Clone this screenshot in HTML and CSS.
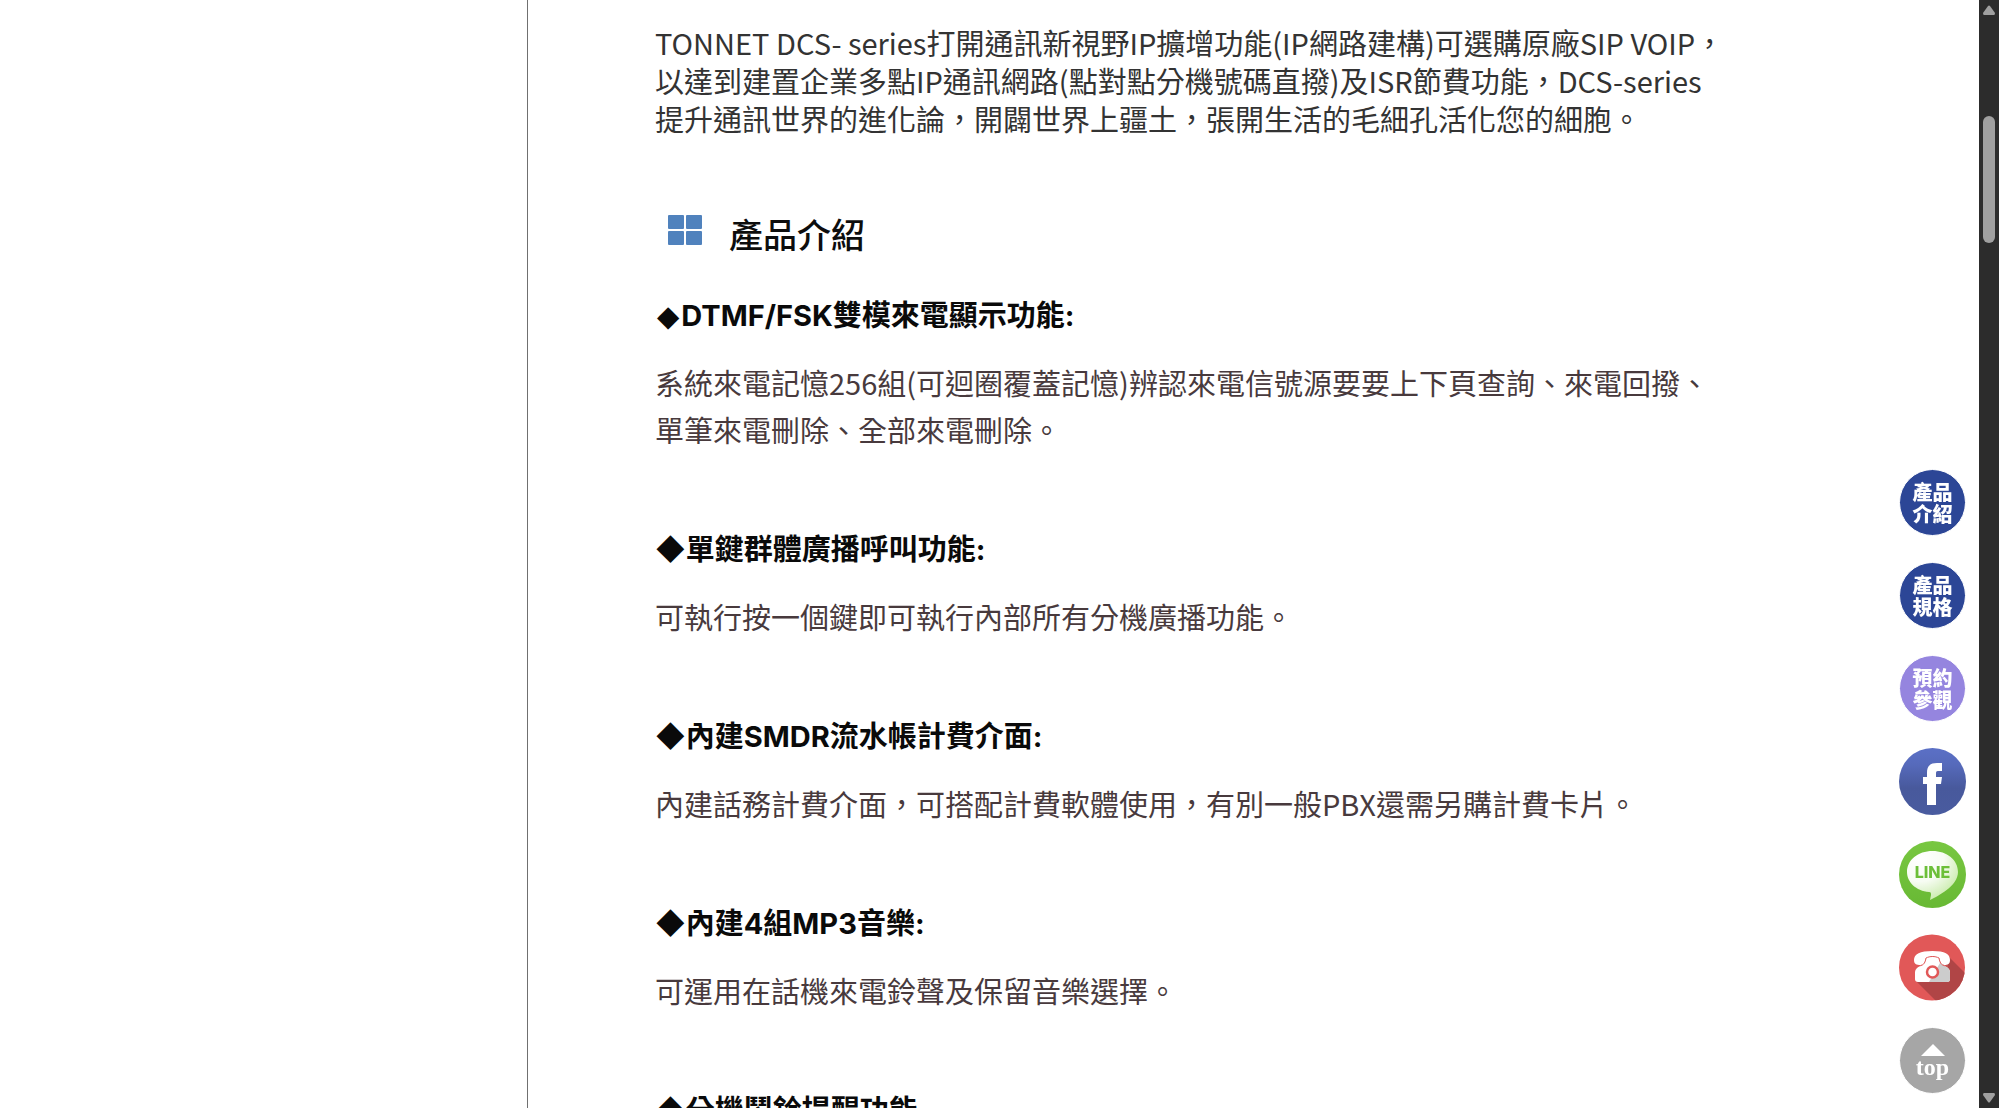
FILE: index.html
```html
<!DOCTYPE html>
<html lang="zh-Hant">
<head>
    <meta charset="UTF-8">
    <title>TONNET DCS-series</title>
    <link rel="stylesheet" href="styles.css">
</head>
<body>
    <div class="page">
        <aside class="sidebar"></aside>

        <main class="content">
            <p class="intro">TONNET DCS- series打開通訊新視野IP擴增功能(IP網路建構)可選購原廠SIP VOIP，<br>以達到建置企業多點IP通訊網路(點對點分機號碼直撥)及ISR節費功能，DCS-series<br>提升通訊世界的進化論，開闢世界上疆土，張開生活的毛細孔活化您的細胞。</p>

            <h2 class="title" id="intro">
                <svg class="title-icon" viewBox="0 0 34 30" aria-hidden="true">
                    <rect x="0" y="0" width="16" height="14" rx="1"/>
                    <rect x="18" y="0" width="16" height="14" rx="1"/>
                    <rect x="0" y="16" width="16" height="14" rx="1"/>
                    <rect x="18" y="16" width="16" height="14" rx="1"/>
                </svg>
                產品介紹
            </h2>

            <section class="feature">
                <h3><span class="small-mark">◆</span>DTMF/FSK雙模來電顯示功能:</h3>
                <p>系統來電記憶256組(可迴圈覆蓋記憶)辨認來電信號源要要上下頁查詢、來電回撥、<br>單筆來電刪除、全部來電刪除。</p>
            </section>
            <section class="feature">
                <h3>◆單鍵群體廣播呼叫功能:</h3>
                <p>可執行按一個鍵即可執行內部所有分機廣播功能。</p>
            </section>
            <section class="feature">
                <h3>◆內建SMDR流水帳計費介面:</h3>
                <p>內建話務計費介面，可搭配計費軟體使用，有別一般PBX還需另購計費卡片。</p>
            </section>
            <section class="feature">
                <h3>◆內建4組MP3音樂:</h3>
                <p>可運用在話機來電鈴聲及保留音樂選擇。</p>
            </section>
            <section class="feature">
                <h3>◆分機鬧鈴提醒功能</h3>
            </section>
        </main>

        <div class="scrollbar" aria-hidden="true">
            <svg class="arrow" viewBox="0 0 12 10"><path d="M5 1Q6 0 7 1L12 8Q12 10 11 10H1Q0 10 0 8Z"/></svg>
            <div class="track"><div class="thumb"></div></div>
            <svg class="arrow" viewBox="0 0 12 10"><path d="M5 9Q6 10 7 9L12 2Q12 0 11 0H1Q0 0 0 2Z"/></svg>
        </div>
    </div>

    <nav class="float-menu">
        <a href="#intro" class="round blue">產品<br>介紹</a>
        <a href="#spec" class="round blue">產品<br>規格</a>
        <a href="#visit" class="round purple">預約<br>參觀</a>
        <a href="#facebook" aria-label="Facebook">
            <svg viewBox="0 0 67 67">
                <defs>
                    <linearGradient id="fb" x1="0" y1="0" x2="0" y2="1">
                        <stop offset="0" stop-color="#5b70c6"/>
                        <stop offset=".25" stop-color="#566abb"/>
                        <stop offset=".6" stop-color="#48599c"/>
                        <stop offset="1" stop-color="#495b9f"/>
                    </linearGradient>
                </defs>
                <circle cx="33.5" cy="33.5" r="33.5" fill="url(#fb)"/>
                <path fill="#fff" d="M28 57V36h-4v-7h4v-4c0-7 3-10 10-10h5v8h-4c-2 0-2 1-2 3v3h6l-1 7h-5v21z"/>
            </svg>
        </a>
        <a href="#line">
            <svg viewBox="0 0 67 67">
                <defs>
                    <linearGradient id="ln" x1="0" y1="0" x2="0" y2="1">
                        <stop offset="0" stop-color="#78c741"/>
                        <stop offset="1" stop-color="#68b934"/>
                    </linearGradient>
                    <radialGradient id="bubble" cx=".25" cy=".15" r=".95">
                        <stop offset="0" stop-color="#fff"/>
                        <stop offset=".5" stop-color="#f7fcf3"/>
                        <stop offset="1" stop-color="#c3e9a2"/>
                    </radialGradient>
                </defs>
                <circle cx="33.5" cy="33.5" r="33.5" fill="url(#ln)"/>
                <path fill="url(#bubble)" d="M33.5 10C19 10 8 19 8 31c0 10 9 19 22 20 2 0 2 1 2 3l-1 5c8-4 28-14 28-28C59 19 48 10 33.5 10z"/>
                <text class="line-text" x="33.5" y="37" text-anchor="middle">LINE</text>
            </svg>
        </a>
        <a href="#phone" aria-label="電話">
            <svg viewBox="0 0 67 67">
                <defs>
                    <clipPath id="disc"><circle cx="33" cy="33.5" r="33"/></clipPath>
                </defs>
                <circle cx="33" cy="33.5" r="33" fill="#e15858"/>
                <path clip-path="url(#disc)" fill="#b04546" d="M50 23l30 30-20 30H53L17 47z"/>
                <path fill="#fff" d="M27 23h13l1 5 8 6q2 2 2 4v7q0 3-3 3H19q-3 0-3-3v-7q0-2 2-4l8-6z"/>
                <path fill="#ccc" d="M41 29l8 5q2 2 2 4v7q0 3-3 3H30z"/>
                <path fill="#fff" d="M15 26c0-6 6-9 18.500-9S51 20 51 26c0 4-2 5-6 5-3-1-4-3-5-7-4-2-9-2-13 0-1 4-2 6-5 7-5 0-7-1-7-5z"/>
                <path fill="none" stroke="#e15858" stroke-width="1" d="M18 32c6 0 8-2 9-8 4-2 9-2 13 0 1 6 3 8 9 8"/>
                <circle cx="33.500" cy="38" r="5.500" fill="#fff" stroke="#e15858" stroke-width="2.500"/>
            </svg>
        </a>
        <a href="#" class="round gray">
            <svg class="up" viewBox="0 0 24 12" aria-hidden="true"><path fill="#fff" d="M12 0l12 12H0z"/></svg>
            top
        </a>
    </nav>
</body>
</html>
```
FILE: styles.css
```css
* {
    box-sizing: border-box;
}
body {
    margin: 0;
    background: #fff;
    color: #333;
    font-family: "Noto Sans CJK TC", sans-serif;
    font-size: 29px;
}
h2, h3, p {
    margin: 0;
}

.page {
    display: flex;
    height: 100vh;
    overflow: hidden;
}
.sidebar {
    flex: 0 0 528px;
    border-right: 1px solid #707070;
}
.content {
    flex: 1;
    padding: 23px 0 0 127px;
    white-space: nowrap;
}

.intro {
    line-height: 38px;
}
.title {
    display: flex;
    align-items: center;
    gap: 27px;
    margin: 73px 0 35px;
    padding-left: 13px;
    color: #0d0d0d;
    font-size: 34px;
    font-weight: 500;
    line-height: 48px;
}
.title-icon {
    width: 34px;
    height: 30px;
    margin-bottom: 8px;
    fill: #5082bd;
}

.feature {
    margin-bottom: 74px;
}
.feature h3 {
    margin-bottom: 20px;
    color: #0a0a0a;
    font-family: Inter, "Noto Sans CJK TC", sans-serif;
    font-size: 29px;
    font-weight: 700;
    line-height: 46px;
}
.feature p {
    color: #483a3d;
    line-height: 47px;
}
.small-mark {
    padding: 0 2px;
    font-family: "DejaVu Sans", sans-serif;
}

.scrollbar {
    display: flex;
    flex: 0 0 20px;
    flex-direction: column;
    align-items: center;
    padding: 5px 0;
    background: #2c2c2c;
}
.arrow {
    width: 12px;
    height: 10px;
    fill: #a0a0a0;
}
.track {
    flex: 1;
    padding-top: 101px;
}
.thumb {
    width: 12px;
    height: 127px;
    border-radius: 6px;
    background: #a0a0a0;
}

.float-menu {
    position: fixed;
    right: 33px;
    bottom: 14px;
    display: flex;
    flex-direction: column;
    align-items: center;
    gap: 26px;
}
.float-menu a {
    width: 67px;
    height: 67px;
    color: #fff;
    text-decoration: none;
}
.float-menu svg {
    display: block;
}
.float-menu .round {
    display: flex;
    flex-direction: column;
    align-items: center;
    justify-content: center;
    border: 1px solid #fff;
    border-radius: 50%;
    font-size: 20px;
    font-weight: 900;
    line-height: 22px;
}
.blue {
    background: #2c4696;
}
.purple {
    background: #9585df;
}
.float-menu .gray {
    background: #a6a6a6;
    font-family: "Liberation Serif", serif;
    font-size: 24px;
    font-weight: 700;
}
.up {
    width: 24px;
    height: 12px;
}
.line-text {
    fill: #6cbf38;
    font-family: Inter, sans-serif;
    font-size: 16px;
    font-weight: 800;
}
```
